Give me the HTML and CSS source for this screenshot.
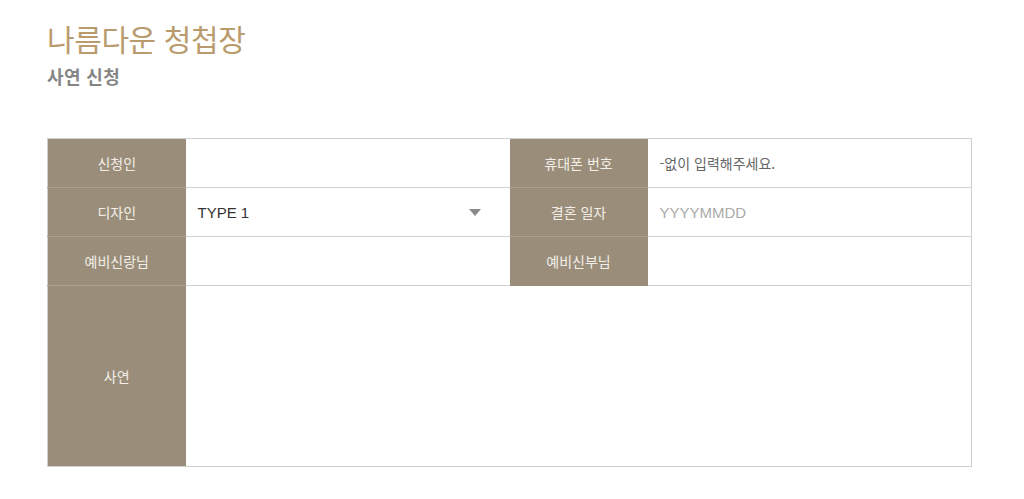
FILE: index.html
```html
<!DOCTYPE html>
<html lang="ko">
<head>
<meta charset="utf-8">
<link rel="stylesheet" href="styles.css">
</head>
<body>
<div class="page">
  <h1 class="title">나름다운 청첩장</h1>
  <h2 class="subtitle">사연 신청</h2>
  <table class="form">
    <colgroup>
      <col class="c-label"><col class="c-field"><col class="c-label"><col class="c-field">
    </colgroup>
    <tr>
      <th>신청인</th>
      <td></td>
      <th>휴대폰 번호</th>
      <td><span class="ph dark">-없이 입력해주세요.</span></td>
    </tr>
    <tr>
      <th>디자인</th>
      <td><div class="select"><span>TYPE 1</span><span class="caret"></span></div></td>
      <th>결혼 일자</th>
      <td><span class="ph latin">YYYYMMDD</span></td>
    </tr>
    <tr>
      <th>예비신랑님</th>
      <td></td>
      <th>예비신부님</th>
      <td></td>
    </tr>
    <tr class="tall">
      <th>사연</th>
      <td colspan="3"></td>
    </tr>
  </table>
</div>
</body>
</html>
```
FILE: styles.css
```css
* { box-sizing: border-box; }
html, body { margin: 0; padding: 0; background: #fff; }
body { font-family: "Noto Sans CJK KR", "Noto Sans", sans-serif; }
.page { padding: 18px 51px 0 47px; }
.title {
  margin: 0;
  font-size: 30px;
  font-weight: 400;
  line-height: 40px;
  color: #b99b6d;
  letter-spacing: -0.4px;
}
.subtitle {
  margin: 5px 0 0 0;
  font-size: 18px;
  font-weight: 700;
  line-height: 26px;
  color: #858585;
  letter-spacing: 0.4px;
}
.form {
  margin-top: 49px;
  width: 925px;
  border-collapse: collapse;
  table-layout: fixed;
  border: 1px solid #d0d0d0;
}
.c-label { width: 138px; }
.c-field { width: 324px; }
.form th {
  background: #9a8e7b;
  color: #f3efe8;
  font-weight: 400;
  font-size: 14px;
  height: 49px;
  padding: 0;
  text-align: center;
  border-top: 1px solid #aba18f;
}
.form tr:first-child th { border-top: none; }
.form td {
  height: 49px;
  padding: 0 12px;
  border-bottom: 1px solid #d0d0d0;
  font-size: 14px;
  vertical-align: middle;
}
.form tr.tall th, .form tr.tall td { height: 181px; }
.select {
  display: flex;
  align-items: center;
  justify-content: space-between;
  color: #333;
  font-family: "Liberation Sans", Arial, sans-serif;
  font-size: 15px;
  padding-right: 17px;
}
.caret {
  width: 0; height: 0;
  border-left: 6px solid transparent;
  border-right: 6px solid transparent;
  border-top: 7px solid #8a8a8a;
}
.ph { color: #a9a9a9; font-size: 14px; }
.ph.latin { font-family: "Liberation Sans", Arial, sans-serif; font-size: 15px; color: #aaa; }
.ph.dark { color: #666; }
```
